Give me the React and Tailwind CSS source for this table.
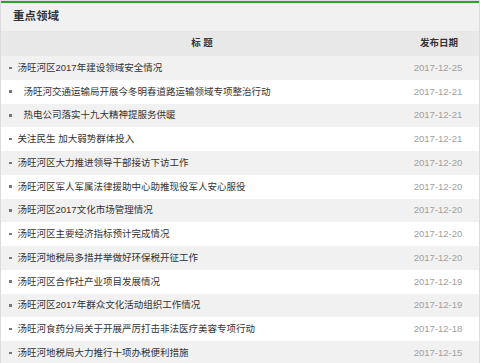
const rows = [
  { title: '汤旺河区2017年建设领域安全情况', date: '2017-12-25' },
  { title: '汤旺河交通运输局开展今冬明春道路运输领域专项整治行动', date: '2017-12-21', indent: true },
  { title: '热电公司落实十九大精神提服务供暖', date: '2017-12-21', indent: true },
  { title: '关注民生 加大弱势群体投入', date: '2017-12-21' },
  { title: '汤旺河区大力推进领导干部接访下访工作', date: '2017-12-20' },
  { title: '汤旺河区军人军属法律援助中心助推现役军人安心服役', date: '2017-12-20' },
  { title: '汤旺河区2017文化市场管理情况', date: '2017-12-20' },
  { title: '汤旺河区主要经济指标预计完成情况', date: '2017-12-20' },
  { title: '汤旺河地税局多措并举做好环保税开征工作', date: '2017-12-20' },
  { title: '汤旺河区合作社产业项目发展情况', date: '2017-12-19' },
  { title: '汤旺河区2017年群众文化活动组织工作情况', date: '2017-12-19' },
  { title: '汤旺河食药分局关于开展严厉打击非法医疗美容专项行动', date: '2017-12-18' },
  { title: '汤旺河地税局大力推行十项办税便利措施', date: '2017-12-15' },
]

export default function App() {
  return (
    <div className="w-[480px] h-[363px] overflow-hidden bg-white font-['Liberation_Sans','Noto_Sans_CJK_SC',sans-serif]">
      <div className="border border-[#dcdcdc] border-b-0">
        <div className="border-t-2 border-[#2aa52a] bg-[#f1f1f1] h-[30px] flex items-center pl-[12px]">
          <h2 className="text-[11.5px] font-bold text-[#333] leading-none">重点领域</h2>
        </div>
        <div className="flex h-[25px] items-center bg-[#e8e8e8] text-[9.5px] font-bold text-[#333]">
          <div className="flex-1 text-center pl-[4px]">标 题</div>
          <div className="w-[80px] text-center">发布日期</div>
        </div>
        {rows.map((r, i) => (
          <div
            key={i}
            className={`flex h-[23.75px] items-center text-[9.5px] ${i % 2 === 0 ? 'bg-[#f1f1f1]' : 'bg-white'}`}
          >
            <div className="flex-1 flex items-center pl-[8px] text-[#333]">
              <span className="shrink-0 w-[2.5px] h-[2.5px] bg-[#777]" />
              <span className={r.indent ? 'ml-[12px]' : 'ml-[6px]'}>{r.title}</span>
            </div>
            <div className="w-[80px] text-center text-[#a0a0a0] pr-[2px]">{r.date}</div>
          </div>
        ))}
      </div>
    </div>
  )
}
